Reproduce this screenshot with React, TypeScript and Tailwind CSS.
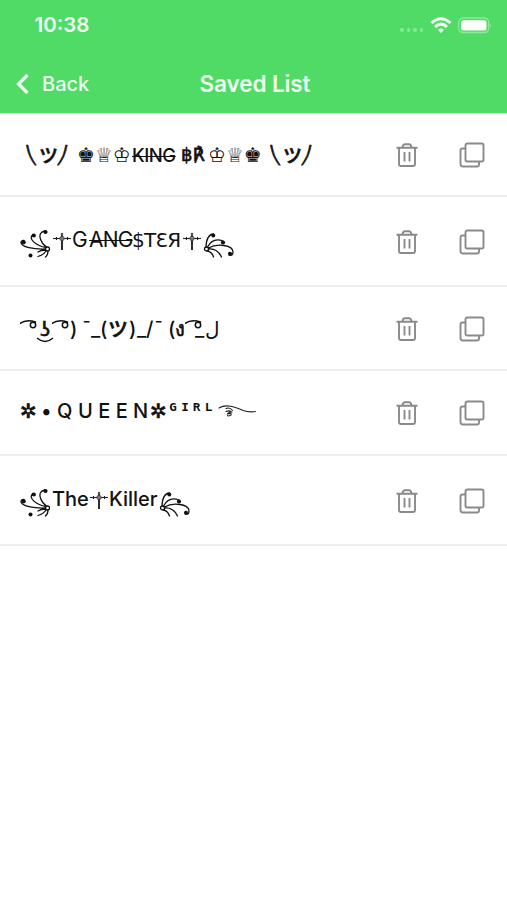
import React from "react";

const FloralLeft = () => (
  <svg className="h-[32px] w-[32px] shrink-0" viewBox="0 0 32 32" fill="none" stroke="#111" strokeWidth="1.3" strokeLinecap="round">
    <circle cx="27.5" cy="22" r="2" />
    <path d="M26.500 20C21 16 16 6 24.500 4M26 20.500C17 19 7 12 13 7.500M25.500 22C14 22.500 1 20 1 15.500Q1.500 13 4 13.500M25.500 23Q21 23 18 25M26 24Q24 27.500 18 29.500M28 24Q28 28 25.500 30" />
    <g fill="#111" stroke="none"><circle cx="25.500" cy="5" r="2.100" /><circle cx="13.800" cy="8.500" r="2.100" /><circle cx="3.700" cy="15.300" r="2.100" /><circle cx="10.500" cy="28.500" r="2" /></g>
  </svg>
);
const FloralRight = () => (
  <svg className="h-[32px] w-[34px] shrink-0" viewBox="0 0 34 32" fill="none" stroke="#111" strokeWidth="1.3" strokeLinecap="round">
    <circle cx="4.5" cy="22" r="2" />
    <path d="M4 20Q4.500 7.500 11.500 7M5.500 20Q11 10 21 14M6.500 21C15 16 31 18 31 25Q31 29 27.500 28M6.500 22Q15 21 19.500 30M5.500 24Q10 25 11.500 30" />
    <g fill="#111" stroke="none"><circle cx="11.300" cy="8.500" r="2" /><circle cx="21" cy="15.500" r="2.100" /><circle cx="28" cy="26.800" r="2.100" /></g>
  </svg>
);

const Dagger = () => (
  <svg className="mt-[4px] h-[20px] w-[20px] shrink-0" viewBox="0 0 20 20" fill="none" stroke="#222" strokeWidth="1.100">
    <path d="M1 7.500h18" /><path d="M10 3v16" strokeWidth="1.900" />
    <circle cx="10" cy="3" r="1.300" fill="#555" stroke="none" /><circle cx="10" cy="7.500" r="2.200" fill="#777" stroke="#444" strokeWidth=".8" />
    <path d="M4.500 6v3M15.500 6v3" />
  </svg>
);

const Trash = () => (
  <svg className="h-[26px] w-[22px]" viewBox="0 0 22 26" fill="none" stroke="#8a8a8a" strokeWidth="1.900" strokeLinejoin="round">
    <path d="M.5 5.700h21M3 6v16q0 2 2 2h12q2 0 2-2V6M6.500 5.500q.5-3.200 2.500-3.200h4q2 0 2.500 3.200M8.500 10v9.500M13.500 10v9.500" />
  </svg>
);
const Copy = () => (
  <svg className="h-[26px] w-[26px]" viewBox="0 0 26 26" fill="none" stroke="#8a8a8a" strokeWidth="1.900" strokeLinejoin="round">
    <rect x="6.500" y="1.500" width="18" height="18" rx="1.800" />
    <path d="M6.500 6.500H3.500q-2 0-2 2v13.500q0 2.500 2.500 2.500h14q2 0 2-2v-3" />
  </svg>
);

const Row = ({ h, pad, icon, children }: { h: string; pad: string; icon: string; children: React.ReactNode }) => (
  <li className={`flex shrink-0 items-start justify-between border-b-2 border-[#efefef] ${h}`}>
    <div className={`flex items-start whitespace-pre pl-[20px] text-[20px] font-medium leading-[26px] ${pad}`}>{children}</div>
    <div className={`flex w-[111px] shrink-0 gap-[41px] ${icon}`}><Trash /><Copy /></div>
  </li>
);

const T = ({ w, c = "", children }: { w: string; c?: string; children?: React.ReactNode }) => (
  <span className={`inline-block shrink-0 ${w} ${c}`}>{children}</span>
);
const dj = "font-['DejaVu_Sans',sans-serif]";
const cjk = "font-['Noto_Sans_CJK_JP',sans-serif]";
const bold = "[-webkit-text-stroke:0.6px_#111]";
const strike = "line-through decoration-[1px]";

const Shrug = () => (
  <>
    <T w="w-[12px]" c={`${dj} text-[17px] -skew-x-[-12deg] ${bold}`}>⎝</T>
    <T w="w-[19px]" c={`${cjk} text-[19px] ${bold}`}>ツ</T>
    <T w="w-[12px]" c={`${dj} text-[17px] -skew-x-[12deg] ${bold}`}>⎠</T>
  </>
);

const Eye = () => (
  <svg className="mt-[3px] h-[14px] w-[18px] shrink-0" viewBox="0 0 18 14" fill="none" stroke="#111" strokeWidth="1.500" strokeLinecap="round">
    <path d="M0 4.500Q6 0 15.500 3" /><circle cx="13" cy="6" r="2.700" />
  </svg>
);

const Hand = () => (
  <svg className="mt-[5px] h-[18px] w-[40px] shrink-0" viewBox="0 0 40 18" fill="none" stroke="#222" strokeWidth="1.100" strokeLinecap="round">
    <path d="M1 5C9 0 19 5 25 7.500Q31 9.500 37.500 8.500M8 5.500Q12 4 14.500 7.500M8 8.500Q11 7 13.500 9Q10 9.500 9.500 11Q14 9.500 13 12Q10 13.500 9.500 12.500" />
  </svg>
);

export default function App() {
  return (
    <main className="flex h-[900px] w-[507px] flex-col overflow-hidden bg-white font-['Inter',sans-serif] text-[#111]">
      <header className="h-[114px] shrink-0 border-b border-[#c0ebc6] bg-[#50db66] text-[#effff0]">
        <div className="flex h-[50px] items-center pl-[34.500px] pr-[15px]">
          <span className="text-[20.500px] font-semibold leading-[24px]">10:38</span>
          <div className="ml-auto flex items-center">
            <div className="mr-[7px] mt-[10px] flex gap-[3px]">
              {[0, 1, 2, 3].map((i) => <i key={i} className="size-[3.500px] rounded-full bg-[#8ae998]" />)}
            </div>
            <svg className="h-[17px] w-[22px]" viewBox="0 0 22 17" fill="none" stroke="#f7fff8" strokeWidth="3">
              <path d="M1.500 6Q11-2.500 20.500 6M5 9.800Q11 4.500 17 9.800" /><path d="m11 16-3-3.200q3-2.600 6 0z" fill="#f7fff8" stroke="none" />
            </svg>
            <svg className="ml-[6px] h-[17px] w-[34px]" viewBox="0 0 34 17"><rect x=".7" y="1" width="30" height="14.500" rx="4.500" fill="none" stroke="#91e99e" strokeWidth="1.300" /><rect x="3" y="3.200" width="25.500" height="10.200" rx="2.500" fill="white" /><path d="M32 6q2 2.300 0 4.600z" fill="#91e99e" /></svg>
          </div>
        </div>
        <div className="grid h-[63px] grid-cols-[1fr_130px_1fr] items-center">
          <div className="flex items-center pl-[15px] pt-[4px]">
            <svg className="mr-[13px] h-[22px] w-[14px]" viewBox="0 0 14 22" fill="none" stroke="currentColor" strokeWidth="3.300"><path d="m12.500 2-9 9 9 9" /></svg>
            <span className="text-[20px] font-medium">Back</span>
          </div>
          <h1 className="pl-[3px] pt-[4px] text-center text-[22.500px] font-semibold tracking-[-0.100px]">Saved List</h1>
          <span />
        </div>
      </header>
      <ul className="flex flex-col">
        <Row h="h-[83px]" pad="pt-[28px]" icon="pt-[28px]">
          <T w="w-[7px]" /><Shrug /><T w="w-[7px]" />
          <T w="w-[55px]" c={`${dj} text-[20px]`}>♚♕♔</T>
          <T w="w-[49px]" c={`text-[18.500px] tracking-[-0.500px] ${strike}`}>KING</T>
          <T w="w-[27px]" c={`${dj} text-[18px] ${bold}`}>฿℟</T>
          <T w="w-[63px]" c={`${dj} text-[20px]`}>♔♕♚</T>
          <Shrug />
        </Row>
        <Row h="h-[90px]" pad="pt-[30px]" icon="pt-[32px]">
          <FloralLeft /><Dagger />
          <T w="w-[17px]" c="font-normal text-[21px]">G</T>
          <T w="w-[43px]" c={`font-normal text-[21px] tracking-[-0.800px] ${strike}`}>ANG</T>
          <T w="w-[50px]" c={`${dj} text-[20px] tracking-[-0.700px]`}>$TƐЯ</T>
          <Dagger /><FloralRight />
        </Row>
        <Row h="h-[84px]" pad="pt-[29px]" icon="pt-[29px]">
          <Eye />
          <span className={`relative w-[14px] shrink-0 text-center ${dj} ${bold}`}>ʖ
            <svg className="absolute left-[-2px] top-[21px] h-[6px] w-[18px]" viewBox="0 0 18 6" fill="none" stroke="#111" strokeWidth="1.400"><path d="M1 1Q9 8 17 1" /></svg>
          </span>
          <Eye />
          <T w="w-[12px]">)</T><T w="w-[9px]">¯</T><T w="w-[9px]">_</T><T w="w-[8px]">(</T>
          <T w="w-[21px]" c={`${cjk} text-[20px] ${bold}`}>ツ</T>
          <T w="w-[8px]">)</T><T w="w-[9px]">_</T><T w="w-[8px]">/</T><T w="w-[14px]">¯</T><T w="w-[7px]">(</T>
          <T w="w-[10px]" c={`${dj} ${bold}`}>ง</T>
          <Eye />
          <T w="w-[10px]" c="-ml-[8px]">_</T><T w="w-[14px]" c={dj}>ل</T>
        </Row>
        <Row h="h-[85px]" pad="pt-[27px]" icon="pt-[29px]">
          <T w="w-[21px]" c={`${dj} ${bold}`}>✲</T><T w="w-[109px]" c="tracking-[0.050px]">• Q U E E N</T><T w="w-[17px]" c={`${dj} ${bold}`}>✲</T>
          <T w="w-[51px]" c="font-['DejaVu_Sans_Mono',monospace] font-bold">ᴳᴵᴿᴸ</T>
          <Hand />
        </Row>
        <Row h="h-[90px]" pad="pt-[30px]" icon="pt-[32px]">
          <FloralLeft /><T w="w-[37px]">The</T><Dagger /><T w="w-[49px]">Killer</T><FloralRight />
        </Row>
      </ul>
    </main>
  );
}
